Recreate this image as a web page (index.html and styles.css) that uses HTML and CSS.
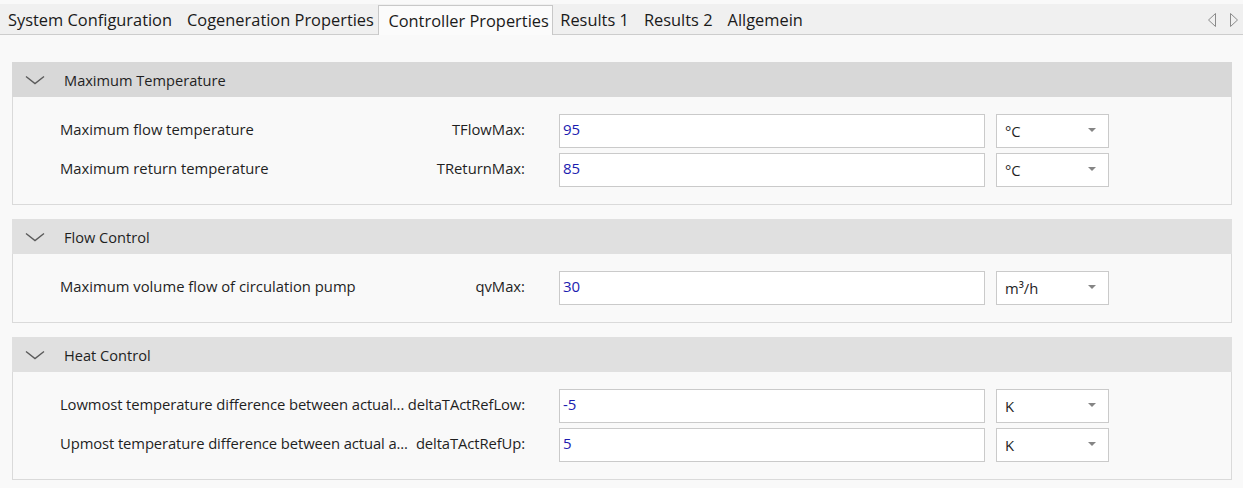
FILE: index.html
```html
<!DOCTYPE html>
<html>
<head>
<meta charset="utf-8">
<link rel="stylesheet" href="styles.css">
</head>
<body>
<div class="tabbar">
  <div class="tab first">System Configuration</div>
  <div class="tab">Cogeneration Properties</div>
  <div class="tab active">Controller Properties</div>
  <div class="tab">Results 1</div>
  <div class="tab">Results 2</div>
  <div class="tab">Allgemein</div>
  <div class="scroll">
    <svg width="10" height="16" viewBox="0 0 10 16"><polygon points="8.5,1.5 8.5,14.5 1.5,8" fill="none" stroke="#8a8a8a" stroke-width="1"/></svg>
    <svg width="10" height="16" viewBox="0 0 10 16"><polygon points="1.5,1.5 1.5,14.5 8.5,8" fill="none" stroke="#8a8a8a" stroke-width="1"/></svg>
  </div>
</div>
<div class="content">
  <section class="panel">
    <div class="panel-header hover">
      <svg class="chevron" width="20" height="10" viewBox="0 0 20 10"><polyline points="1,1.5 10,8.5 19,1.5" fill="none" stroke="#5a5a5a" stroke-width="1.4"/></svg>
      <span class="panel-title">Maximum Temperature</span>
    </div>
    <div class="panel-body">
      <div class="row">
        <div class="caption"><span class="label">Maximum flow temperature</span><span class="name">TFlowMax:</span></div>
        <div class="input">95</div>
        <div class="select"><span>°C</span><span class="arrow"></span></div>
      </div>
      <div class="row">
        <div class="caption"><span class="label">Maximum return temperature</span><span class="name">TReturnMax:</span></div>
        <div class="input">85</div>
        <div class="select"><span>°C</span><span class="arrow"></span></div>
      </div>
    </div>
  </section>
  <section class="panel">
    <div class="panel-header">
      <svg class="chevron" width="20" height="10" viewBox="0 0 20 10"><polyline points="1,1.5 10,8.5 19,1.5" fill="none" stroke="#5a5a5a" stroke-width="1.4"/></svg>
      <span class="panel-title">Flow Control</span>
    </div>
    <div class="panel-body">
      <div class="row">
        <div class="caption"><span class="label">Maximum volume flow of circulation pump</span><span class="name">qvMax:</span></div>
        <div class="input">30</div>
        <div class="select"><span>m³/h</span><span class="arrow"></span></div>
      </div>
    </div>
  </section>
  <section class="panel">
    <div class="panel-header">
      <svg class="chevron" width="20" height="10" viewBox="0 0 20 10"><polyline points="1,1.5 10,8.5 19,1.5" fill="none" stroke="#5a5a5a" stroke-width="1.4"/></svg>
      <span class="panel-title">Heat Control</span>
    </div>
    <div class="panel-body">
      <div class="row">
        <div class="caption long"><span class="label">Lowmost temperature difference between actual...</span><span class="name">deltaTActRefLow:</span></div>
        <div class="input">-5</div>
        <div class="select"><span>K</span><span class="arrow"></span></div>
      </div>
      <div class="row">
        <div class="caption long"><span class="label">Upmost temperature difference between actual a... </span><span class="name">deltaTActRefUp:</span></div>
        <div class="input">5</div>
        <div class="select"><span>K</span><span class="arrow"></span></div>
      </div>
    </div>
  </section>
</div>
</body>
</html>
```
FILE: styles.css
```css
* { box-sizing: border-box; }
html, body { margin: 0; padding: 0; }
body {
  background: #f9f9f9;
  font-family: "Open Sans", "Noto Sans", "Liberation Sans", sans-serif;
  color: #1f1f1f;
  width: 1243px;
  height: 488px;
  overflow: hidden;
}
.tabbar {
  margin-top: 4px;
  height: 31px;
  background: #f0f0f0;
  border-bottom: 1px solid #cdcdcd;
  display: flex;
  align-items: flex-end;
  font-size: 16.4px;
}
.tab {
  height: 29px;
  line-height: 29px;
  padding: 0 7.5px;
  color: #1a1a1a;
  white-space: nowrap;
}
.tab.first { padding-left: 8px; }
.tab.active {
  background: #fbfbfb;
  border: 1px solid #c8c8c8;
  border-bottom: none;
  margin: 0 0 -1px -3px;
  height: 30px;
  padding: 0 3px 0 9px;
}
.scroll {
  margin-left: auto;
  align-self: center;
  display: flex;
  gap: 12px;
  margin-right: 4px;
  padding-top: 1px;
}
.scroll svg { display: block; }
.content {
  padding: 27px 11px 0 12px;
}
.panel { margin-bottom: 14px; }
.panel-header {
  height: 35px;
  background: #e0e0e0;
  display: flex;
  align-items: center;
}
.panel-header.hover { background: #d8d8d8; }
.chevron { margin-left: 13px; display: block; }
.panel-title {
  margin-left: 19px;
  font-size: 14.6px;
  color: #1f1f1f;
}
.panel-body {
  border: 1px solid #dadada;
  border-top: none;
  padding: 17px 0 17px 47px;
}
.row {
  display: flex;
  align-items: center;
  height: 34px;
  margin-bottom: 5px;
}
.row:last-child { margin-bottom: 0; }
.caption {
  width: 465px;
  display: flex;
  justify-content: space-between;
  font-size: 14.8px;
  color: #1f1f1f;
  white-space: pre;
  padding-bottom: 4px;
}
.caption.long { letter-spacing: -0.1px; }
.label { overflow: hidden; min-width: 0; }
.name { text-align: right; flex-shrink: 0; }
.input {
  margin-left: 34px;
  width: 426px;
  height: 34px;
  background: #fff;
  border: 1px solid #cacaca;
  color: #1c1cb0;
  font-size: 15px;
  padding: 4px 0 0 3px;
}
.select {
  margin-left: 11px;
  width: 113px;
  height: 34px;
  background: #fff;
  border: 1px solid #cacaca;
  font-size: 14.8px;
  padding: 0 12px 0 8px;
  display: flex;
  align-items: center;
  justify-content: space-between;
}
.arrow {
  width: 0;
  height: 0;
  border-left: 4px solid transparent;
  border-right: 4px solid transparent;
  border-top: 4px solid #858585;
  margin-top: -2px;
}
```
